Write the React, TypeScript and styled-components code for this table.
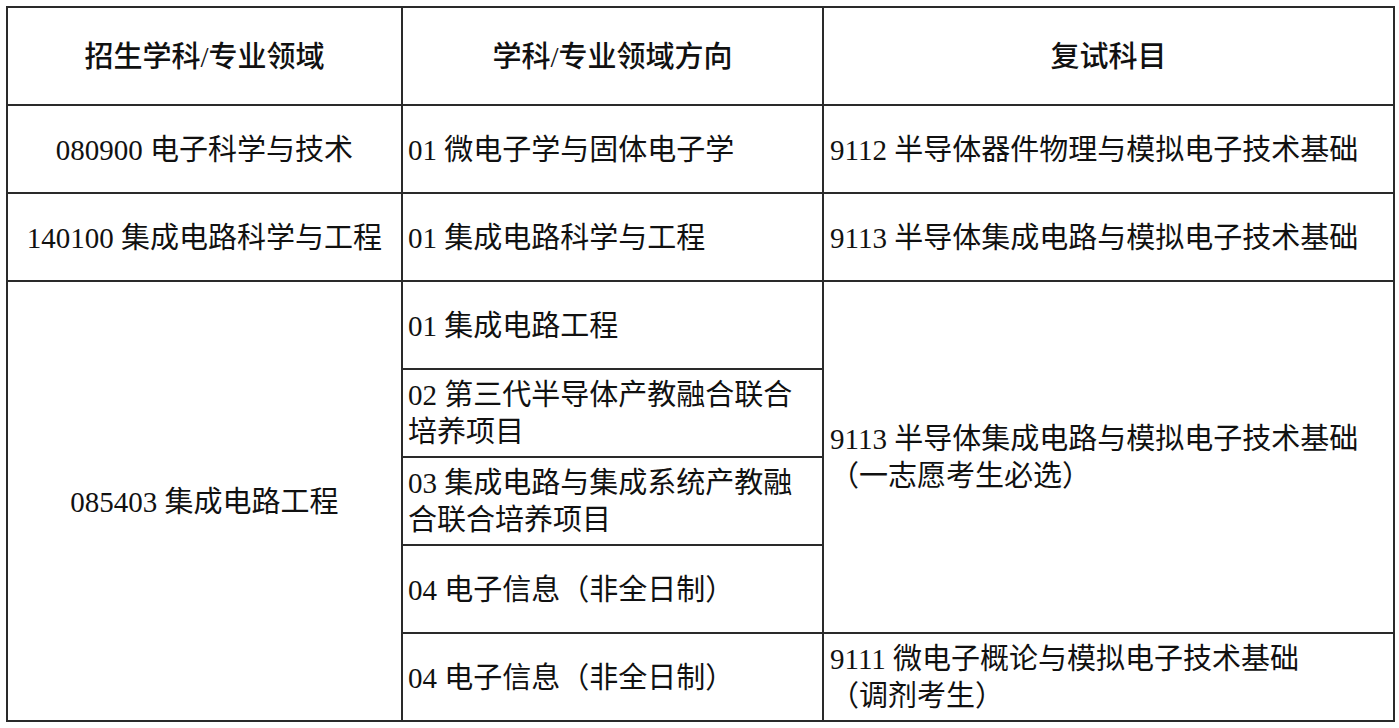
import React from 'react';
import styled, { createGlobalStyle } from 'styled-components';

const serifStack = '"Liberation Serif", "Times New Roman", "Noto Sans CJK SC", serif';

const GlobalStyle = createGlobalStyle`
  html, body {
    margin: 0;
    padding: 0;
    background: #fff;
  }
  body {
    padding: 6px 0 0 6px;
    font-family: ${serifStack};
    color: #111;
  }
`;

const Table = styled.table`
  width: 1387px;
  table-layout: fixed;
  border-collapse: collapse;
  border: 2px solid #222;
  font-family: ${serifStack};
  font-size: 29px;
  line-height: 37px;
`;

const HeadCell = styled.th`
  height: 94px;
  padding: 2px 0 0;
  border: 2px solid #2a2a2a;
  font-family: ${serifStack};
  font-weight: 500;
  text-align: center;
  vertical-align: middle;
`;

const Cell = styled.td<{ $align?: 'left' | 'center'; $pad?: number }>`
  height: 84px;
  padding: 2px 0 0 ${p => p.$pad ?? 5}px;
  border: 2px solid #2a2a2a;
  font-family: ${serifStack};
  text-align: ${p => p.$align ?? 'left'};
  vertical-align: middle;
  white-space: nowrap;
`;

const Num = styled.span`
  font-family: "Liberation Serif", "DejaVu Serif", serif;
`;

const rows = [
  {
    code: '080900',
    major: '电子科学与技术',
    dirs: [['01', '微电子学与固体电子学']],
    exam: [['9112', '半导体器件物理与模拟电子技术基础']],
  },
  {
    code: '140100',
    major: '集成电路科学与工程',
    dirs: [['01', '集成电路科学与工程']],
    exam: [['9113', '半导体集成电路与模拟电子技术基础']],
  },
];

const engDirs = [
  [['01', '集成电路工程']],
  [['02', '第三代半导体产教融合联合'], ['', '培养项目']],
  [['03', '集成电路与集成系统产教融'], ['', '合联合培养项目']],
  [['04', '电子信息（非全日制）']],
  [['04', '电子信息（非全日制）']],
];

function Lines({ lines }: { lines: string[][] }) {
  return (
    <>
      {lines.map(([num, text], i) => (
        <React.Fragment key={i}>
          {i > 0 ? <br /> : null}
          {num ? <Num>{num} </Num> : null}
          {text}
        </React.Fragment>
      ))}
    </>
  );
}

export default function App() {
  return (
    <>
      <GlobalStyle />
      <Table>
        <colgroup>
          <col style={{ width: 395 }} />
          <col style={{ width: 421 }} />
          <col style={{ width: 571 }} />
        </colgroup>
        <thead>
          <tr>
            <HeadCell>招生学科/专业领域</HeadCell>
            <HeadCell>学科/专业领域方向</HeadCell>
            <HeadCell>复试科目</HeadCell>
          </tr>
        </thead>
        <tbody>
          {rows.map(r => (
            <tr key={r.code}>
              <Cell $align="center" $pad={0}>
                <Lines lines={[[r.code, r.major]]} />
              </Cell>
              <Cell>
                <Lines lines={r.dirs} />
              </Cell>
              <Cell $pad={6}>
                <Lines lines={r.exam} />
              </Cell>
            </tr>
          ))}
          {engDirs.map((d, i) => (
            <tr key={i}>
              {i === 0 ? (
                <Cell $align="center" $pad={0} rowSpan={5}>
                  <Lines lines={[['085403', '集成电路工程']]} />
                </Cell>
              ) : null}
              <Cell>
                <Lines lines={d} />
              </Cell>
              {i === 0 ? (
                <Cell $pad={6} rowSpan={4}>
                  <Lines
                    lines={[
                      ['9113', '半导体集成电路与模拟电子技术基础'],
                      ['', '（一志愿考生必选）'],
                    ]}
                  />
                </Cell>
              ) : null}
              {i === 4 ? (
                <Cell $pad={6}>
                  <Lines
                    lines={[
                      ['9111', '微电子概论与模拟电子技术基础'],
                      ['', '（调剂考生）'],
                    ]}
                  />
                </Cell>
              ) : null}
            </tr>
          ))}
        </tbody>
      </Table>
    </>
  );
}
